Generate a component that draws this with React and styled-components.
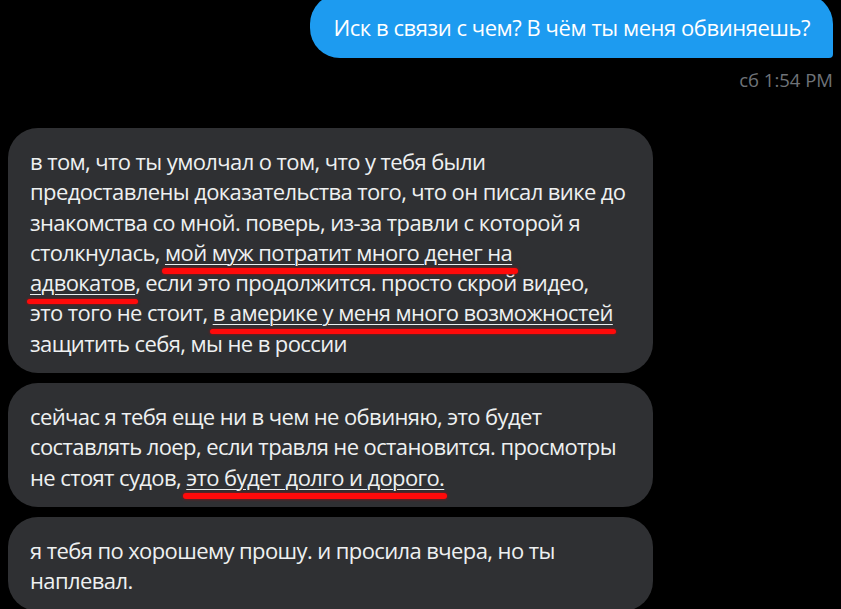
import React from "react";
import styled, { createGlobalStyle } from "styled-components";

const GlobalStyle = createGlobalStyle`
  html, body {
    margin: 0;
    padding: 0;
    background: #000;
    overflow: hidden;
  }
  body {
    font-family: "Open Sans", "Noto Sans", sans-serif;
  }
`;

const Thread = styled.div`
  width: 841px;
  height: 609px;
  overflow: hidden;
  background: #000;
  padding: 0 8px;
  box-sizing: border-box;
  display: flex;
  flex-direction: column;
`;

const SentGroup = styled.div`
  display: flex;
  flex-direction: column;
  align-items: flex-end;
  margin-top: -6px;
`;

const SentBubble = styled.div`
  background: #1d9bf0;
  color: #fff;
  font-size: 22px;
  letter-spacing: -0.45px;
  line-height: 30px;
  padding: 18px 23px 16px;
  border-radius: 30px 30px 4px 30px;
  white-space: nowrap;
`;

const Stamp = styled.div`
  margin-top: 12px;
  font-size: 18.5px;
  line-height: 20px;
  color: #6f7378;
`;

const ReceivedGroup = styled.div`
  margin-top: 38px;
  display: flex;
  flex-direction: column;
  gap: 10px;
`;

const ReceivedBubble = styled.div`
  width: 645px;
  box-sizing: border-box;
  background: #2f3033;
  color: #eef0f1;
  font-size: 22px;
  letter-spacing: -0.6px;
  line-height: 30.3px;
  padding: 18px 22px 15px;
  border-radius: 30px;
  white-space: nowrap;
`;

const Marked = styled.span`
  position: relative;
  text-decoration: underline;
  text-decoration-thickness: 1px;
  text-underline-offset: 3px;

  &::after {
    content: "";
    position: absolute;
    left: -3px;
    right: ${(p) => (p.$tail ? "-6px" : "-3px")};
    bottom: -7px;
    height: 5.5px;
    border-radius: 3px;
    background: #ff0a0a;
    box-shadow: 0 0 3px rgba(200, 0, 0, 0.8);
  }
`;

export default function App() {
  return (
    <>
      <GlobalStyle />
      <Thread>
        <SentGroup>
          <SentBubble>Иск в связи с чем? В чём ты меня обвиняешь?</SentBubble>
          <Stamp>сб 1:54 PM</Stamp>
        </SentGroup>

        <ReceivedGroup>
          <ReceivedBubble>
            в том, что ты умолчал о том, что у тебя были
            <br />
            предоставлены доказательства того, что он писал вике до
            <br />
            знакомства со мной. поверь, из-за травли с которой я
            <br />
            столкнулась, <Marked $tail>мой муж потратит много денег на</Marked>
            <br />
            <Marked>адвокатов</Marked>, если это продолжится. просто скрой видео,
            <br />
            это того не стоит, <Marked>в америке у меня много возможностей</Marked>
            <br />
            защитить себя, мы не в россии
          </ReceivedBubble>

          <ReceivedBubble>
            сейчас я тебя еще ни в чем не обвиняю, это будет
            <br />
            составлять лоер, если травля не остановится. просмотры
            <br />
            не стоят судов, <Marked>это будет долго и дорого.</Marked>
          </ReceivedBubble>

          <ReceivedBubble>
            я тебя по хорошему прошу. и просила вчера, но ты
            <br />
            наплевал.
          </ReceivedBubble>
        </ReceivedGroup>
      </Thread>
    </>
  );
}
